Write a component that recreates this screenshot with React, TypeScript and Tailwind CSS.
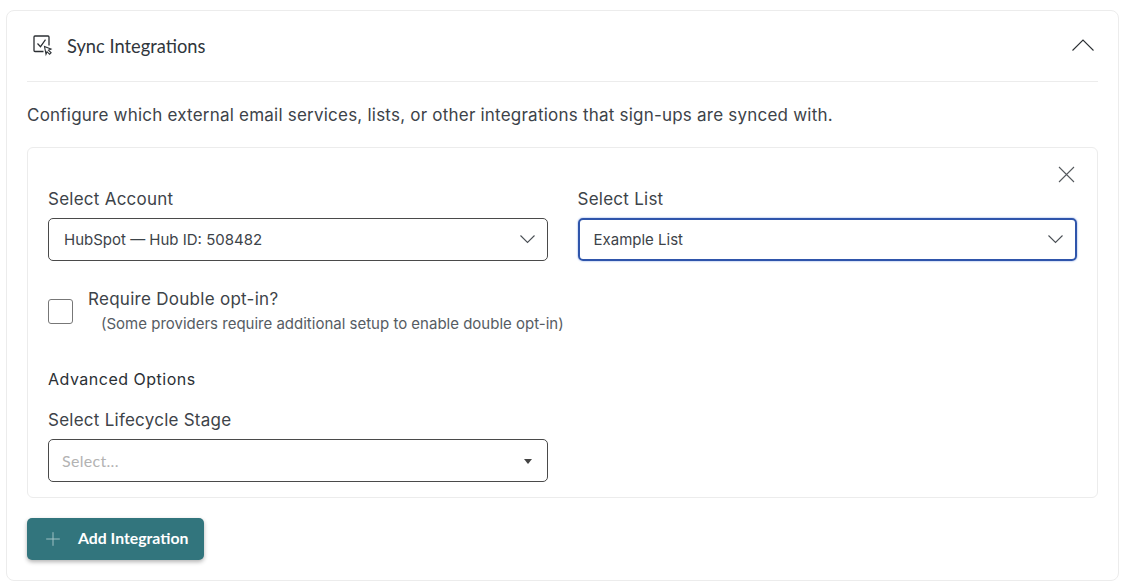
import { Plus } from 'lucide-react'

const inter = "font-['Inter',sans-serif]"

function SyncIcon() {
  return (
    <svg width="20" height="22" viewBox="0 0 20 22" fill="none" stroke="#2b2f33" strokeWidth="1.1">
      <path d="M10.5 16.5H2a1 1 0 0 1-1-1V2a1 1 0 0 1 1-1h13a1 1 0 0 1 1 1v8.5" strokeWidth="1.3" />
      <path d="M4.5 8.5l3 3.2 5-7" strokeWidth="1.2" />
      <path d="M11.5 11.5l6.5 2.6-2.5 1.1 2.6 2.6-1.5 1.5-2.6-2.6-1 2.5z" fill="#fff" />
    </svg>
  )
}

function Chevron({ up, width, color }: { up?: boolean; width: number; color: string }) {
  const h = width / 2
  return (
    <svg width={width} height={h + 1} viewBox={`0 0 ${width} ${h + 1}`} fill="none" stroke={color} strokeWidth="1.1">
      <path d={up ? `M0.5 ${h + 0.5}L${h} 1L${width - 0.5} ${h + 0.5}` : `M0.5 0.5L${h} ${h}L${width - 0.5} 0.5`} />
    </svg>
  )
}

function SelectBox({ value, focused }: { value: string; focused?: boolean }) {
  return (
    <div
      className={
        focused
          ? 'flex h-[43px] items-center justify-between rounded-[5px] border-2 border-[#2f55ab] pl-[14px] pr-[12px] shadow-[0_0_2px_#6f93e0]'
          : 'flex h-[43px] items-center justify-between rounded-[5px] border border-[#4a4a4a] pl-[15px] pr-[12px]'
      }
    >
      <span className="pt-[2px] text-[15px] text-[#3d4349]">{value}</span>
      <Chevron width={15} color="#4a4f55" />
    </div>
  )
}

export default function App() {
  return (
    <div className={`${inter} bg-white pl-[6px] pr-[17px] pt-[10px]`}>
      <section className="h-[571px] rounded-[8px] border border-[#ececec] px-[20px]">
        <header className="flex h-[71px] items-center justify-between border-b border-[#ececec]">
          <div className="flex items-center gap-[14px] pl-[6px]">
            <SyncIcon />
            <h2 className="font-['Lato',sans-serif] text-[18.3px] leading-[24px] text-[#30363b]">Sync Integrations</h2>
          </div>
          <span className="mr-[4px] mb-[2px]">
            <Chevron up width={22} color="#2b2f33" />
          </span>
        </header>

        <p className="mt-[22px] text-[17px] leading-[22px] tracking-[0.22px] text-[#3d4349]">
          Configure which external email services, lists, or other integrations that sign-ups are synced with.
        </p>

        <div className="mt-[21px] h-[351px] rounded-[6px] border border-[#ececec] px-[20px] pt-[15px]">
          <div className="flex h-[22px] items-center justify-end">
            <svg width="17" height="17" viewBox="0 0 17 17" fill="none" stroke="#55595e" strokeWidth="1.1" className="mr-[2px]">
              <path d="M1 1l15 15M16 1L1 16" />
            </svg>
          </div>
          <div className="mt-[2px] grid grid-cols-2 gap-[30px]">
            <div>
              <label className="mb-[7px] block text-[17px] leading-[24px] tracking-[0.25px] text-[#3d4349]">Select Account</label>
              <SelectBox value="HubSpot — Hub ID: 508482" />
            </div>
            <div>
              <label className="mb-[7px] block text-[17px] leading-[24px] tracking-[0.25px] text-[#3d4349]">Select List</label>
              <SelectBox value="Example List" focused />
            </div>
          </div>

          <div className="mt-[26px] flex items-center gap-[15px]">
            <span className="size-[25px] rounded-[3px] border border-[#777]" />
            <div>
              <div className="text-[17px] leading-[24px] tracking-[0.28px] text-[#3d4349]">Require Double opt-in?</div>
              <div className="ml-[13px] mt-[1px] text-[15px] leading-[24px] text-[#565c63]">
                (Some providers require additional setup to enable double opt-in)
              </div>
            </div>
          </div>

          <h3 className="mt-[32px] text-[16px] leading-[22px] tracking-[0.5px] text-[#2b3035]">Advanced Options</h3>
          <label className="mt-[18px] block text-[17px] leading-[24px] tracking-[0.25px] text-[#3d4349]">Select Lifecycle Stage</label>
          <div className="mt-[7px] flex h-[43px] w-[500px] items-center justify-between rounded-[5px] border border-[#4a4a4a] pl-[13px] pr-[15px]">
            <span className="font-['Lato',sans-serif] text-[16px] tracking-[0.3px] text-[#b3b3b3]">Select...</span>
            <span className="mt-[1px] h-0 w-0 border-x-[4.5px] border-t-[5px] border-x-transparent border-t-[#444]" />
          </div>
        </div>

        <button
          type="button"
          className="mt-[20px] flex h-[42px] w-[177px] items-center gap-[14px] rounded-[5px] bg-[#32757d] pl-[15px] text-white shadow-[0_2px_4px_rgba(0,0,0,0.3)]"
        >
          <Plus className="size-[22px] text-[#a9c8cb]" strokeWidth={1} />
          <span className="mb-[2px] font-['Lato',sans-serif] text-[15.8px] font-bold">Add Integration</span>
        </button>
      </section>
    </div>
  )
}
